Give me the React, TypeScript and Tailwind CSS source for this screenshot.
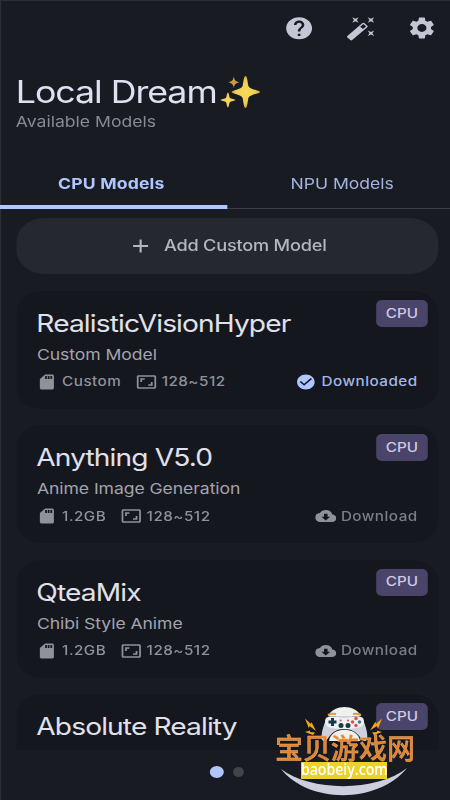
import {
  MdAdd,
  MdAspectRatio,
  MdAutoFixHigh,
  MdCheckCircle,
  MdCloudDownload,
  MdHelp,
  MdSdCard,
  MdSettings,
} from "react-icons/md";

type Model = {
  name: string;
  details?: {
    description: string;
    size: string;
    resolution: string;
    downloaded: boolean;
  };
};

const models: Model[] = [
  {
    name: "RealisticVisionHyper",
    details: { description: "Custom Model", size: "Custom", resolution: "128~512", downloaded: true },
  },
  {
    name: "Anything V5.0",
    details: { description: "Anime Image Generation", size: "1.2GB", resolution: "128~512", downloaded: false },
  },
  {
    name: "QteaMix",
    details: { description: "Chibi Style Anime", size: "1.2GB", resolution: "128~512", downloaded: false },
  },
  { name: "Absolute Reality" },
];

function Sparkles() {
  return (
    <svg className="ml-[3px] h-[34px] w-[34px]" viewBox="0 0 34 34">
      <defs>
        <radialGradient id="spark">
          <stop offset="0" stopColor="#f7da55" />
          <stop offset="0.7" stopColor="#edcd5a" />
          <stop offset="1" stopColor="#cf9e40" />
        </radialGradient>
      </defs>
      <path
        fill="url(#spark)"
        d="M21.500 1 C23 1 23.200 7 24 11 C25 14.500 34 15.500 34 17 C34 18.500 25 19.500 24 23 C23.200 27 23 33 21.500 33 C20 33 19.800 27 19 23 C18 19.500 9.500 18.500 9.500 17 C9.500 15.500 18 14.500 19 11 C19.800 7 20 1 21.500 1Z"
      />
      <path
        fill="url(#spark)"
        d="M6.500 17.500 C7.500 17.500 7.400 21.500 8.200 23 C9 24 13 24.200 13 25 C13 25.800 9 26 8.200 27 C7.400 28.500 7.500 32.500 6.500 32.500 C5.500 32.500 5.600 28.500 4.800 27 C4 26 0 25.800 0 25 C0 24.200 4 24 4.800 23 C5.600 21.500 5.500 17.500 6.500 17.500Z"
      />
      <path fill="#cb9a42" d="M11.500 1.500 C12.200 5.500 13 6.500 16.500 7.300 C13 8.100 12.200 9.100 11.500 13 C10.800 9.100 10 8.100 6.500 7.300 C10 6.500 10.800 5.500 11.500 1.500Z" />
    </svg>
  );
}

function ModelCard({ model }: { model: Model }) {
  const { name, details } = model;
  return (
    <div className="relative h-[118px] shrink-0 rounded-[22px] bg-[#14171e] px-[18px] pt-[15px]">
      <span className="absolute top-[9px] right-[9px] flex h-[27px] w-[44px] items-center justify-center rounded-[5px] bg-[#4a446a] text-[13px] font-medium text-[#d0c9e6]">
        CPU
      </span>
      <h2 className="-ml-[0.5px] text-[24px] leading-[36px] tracking-[-0.75px] text-[#e0e1ea]">{name}</h2>
      {details && (
        <>
          <p className="mt-px text-[15px] leading-[24px] tracking-[-0.05px] text-[#a3a4ad]">{details.description}</p>
          <div className="mt-[6px] flex h-[18px] items-center text-[13px] font-medium tracking-[0.4px] text-[#8f919b]">
            <MdSdCard className="mr-1 -ml-[0.5px] size-[18px]" />
            <span>{details.size}</span>
            <MdAspectRatio className="mr-1 ml-[12.500px] size-[18px]" />
            <span>{details.resolution}</span>
            {details.downloaded ? (
              <span className="ml-auto flex items-center gap-1 text-[#a3b6e4]">
                <MdCheckCircle className="size-[18px] text-[#b0c6ff]" />
                <span className="-mr-[0.4px]">Downloaded</span>
              </span>
            ) : (
              <span className="ml-auto flex items-center gap-1 text-[#7b7d86]">
                <MdCloudDownload className="size-[18px] text-[#8f919b]" />
                <span className="-mr-[0.4px]">Download</span>
              </span>
            )}
          </div>
        </>
      )}
    </div>
  );
}

function Watermark() {
  return (
    <div className="absolute top-[704px] left-[272px] h-[96px] w-[146px]">
      <svg className="absolute inset-0 h-[96px] w-[146px]" viewBox="0 0 146 96">
        <path fill="#cdcfdf" d="M9 65 C39 88 105 88 135 64 C107 99 38 101 9 65Z" />
        <path fill="#cfd0dd" d="M54 16 C58 10 86 10 91 16 C94 22 98 36 93 37 C88 37 87 25 72 25 C58 25 57 37 52 37 C47 37 51 22 54 16Z" />
        <path fill="#f0f0ec" d="M56 12 C62 0 83 0 89 12Z" />
        <path fill="#f0f0ec" d="M54 14 C59 10 66 14 72 14 C79 14 86 10 91 14 C95 23 86 25 72 25 C58 25 50 23 54 14Z" />
        <path fill="#f0f0ec" d="M57 37 C59 22 86 22 88 37Z" />
        <path stroke="#d6a33c" strokeWidth="2" fill="none" d="M56 11 q4 -2 8 -1 M81 10 q4 -1 8 1" />
        <path stroke="#153a4c" strokeWidth="3" d="M60.500 14v8M56.500 18h8" />
        <circle cx="69" cy="21.500" r="2.500" fill="#153a4c" />
        <circle cx="76" cy="21.500" r="2.500" fill="#153a4c" />
        <circle cx="68.500" cy="16.500" r="1" fill="#d04b60" />
        <circle cx="76" cy="16.500" r="1" fill="#d04b60" />
        <circle cx="84" cy="14.500" r="1.700" fill="#e24957" />
        <circle cx="80.500" cy="18" r="1.700" fill="#e24957" />
        <circle cx="87.500" cy="18" r="1.700" fill="#347a96" />
        <circle cx="84" cy="21.500" r="1.700" fill="#e24957" />
        <path
          fill="#f3a51f"
          d="M33 14.500 L39 20 L39.500 18 L44 27 L37.500 22 L37 24.500Z M33 28 L38 26.500 L38 28 L43 28.500 L41 31 L37 29.500Z M110 14.500 L104 20 L103.500 17.500 L98 26.500 L105 22 L106 24.500Z M110 28 L105 26.500 L105 28 L100 28.500 L102 31 L106 29.500Z"
        />
      </svg>
      <span className="absolute top-[30px] left-[3px] text-[28px] leading-[27px] font-medium whitespace-nowrap text-[#e2842c] [-webkit-text-stroke:0.4px_#f3b47c] [font-family:'Noto_Sans_CJK_SC',sans-serif]">
        宝贝游戏网
      </span>
      <span className="absolute top-[58px] left-[29px] flex h-[17px] w-[86px] items-center justify-center bg-[#eed128] pb-[2px] text-[16px] leading-[15px] font-semibold text-white [font-family:'Open_Sans',sans-serif]">
        <span className="scale-x-[0.88]">baobeiy.com</span>
      </span>
    </div>
  );
}

export default function App() {
  return (
    <div className="relative h-[800px] w-[450px] overflow-hidden bg-[#181b22] [font-family:Inter,sans-serif]">
      {/* the phone screen is wider than its native aspect */}
      <div className="flex h-[800px] w-[384px] origin-left scale-x-[1.171875] flex-col border-t border-[#2b2e34] shadow-[inset_1px_0_0_#2b2e34]">
        <header className="flex h-[54px] shrink-0 items-center justify-end gap-[26px] pr-[11px] text-[#c5c6d5]">
          <MdHelp className="size-[26.5px]" />
          <MdAutoFixHigh className="size-[26.5px]" />
          <MdSettings className="size-[26px]" />
        </header>
        <div className="h-[103px] shrink-0 pt-[18px] pl-[13.500px]">
          <h1 className="flex h-[37px] items-center text-[30.5px] tracking-[-0.9px] text-[#e0e1f0]">
            Local Dream
            <Sparkles />
          </h1>
          <p className="text-[15px] leading-[24px] text-[#888a93]">Available Models</p>
        </div>
        <nav className="flex h-[51px] shrink-0 border-b border-[#3c3e45] text-[15px]">
          <div className="-mb-px flex w-[194px] items-center justify-center border-b-4 border-[#b0c6ff] pt-[5px] pr-[4px] font-bold tracking-[0.15px] text-[#b0c6ff]">
            CPU Models
          </div>
          <div className="flex flex-1 items-center justify-center pt-[2px] pl-[6px] text-[#a3b4df]">NPU Models</div>
        </nav>
        <main className="flex h-[541px] shrink-0 flex-col gap-[16.3px] overflow-hidden pt-[9px] pr-[10px] pl-[13.500px]">
          <button className="mb-[0.7px] flex h-[56px] shrink-0 items-center justify-center rounded-[24px] bg-[#25282f] text-[15.5px] font-medium tracking-[-0.18px] text-[#b4b5c0]">
            <MdAdd className="mr-[9px] size-[22px]" />
            Add Custom Model
          </button>
          {models.map((model) => (
            <ModelCard key={model.name} model={model} />
          ))}
        </main>
        <footer className="flex flex-1 items-start justify-center gap-[8px] pt-[16px] pl-[3px]">
          <span className="size-[12px] rounded-full bg-[#b0c6ff]" />
          <span className="mt-[1px] size-[9.5px] rounded-full bg-[#42444b]" />
        </footer>
      </div>
      <Watermark />
    </div>
  );
}
